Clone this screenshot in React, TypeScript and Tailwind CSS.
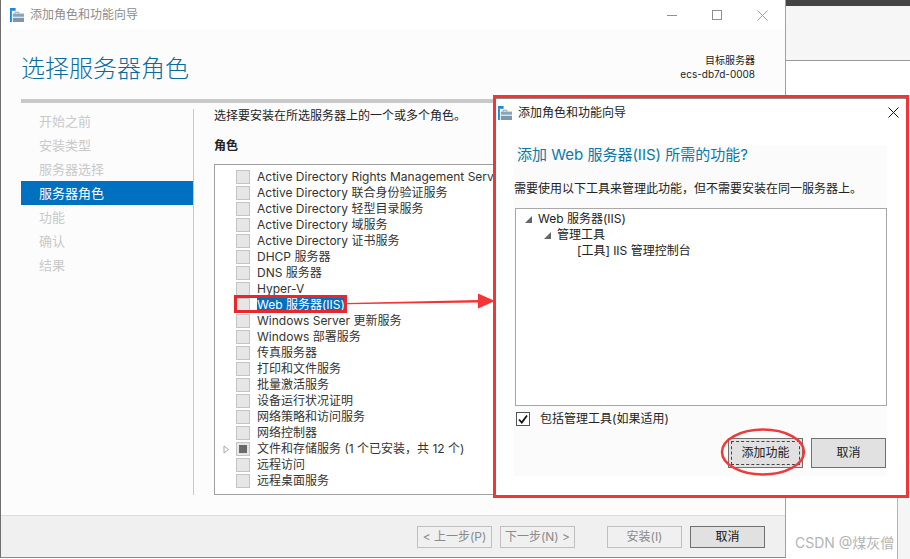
const roles = [
  "Active Directory Rights Management Services",
  "Active Directory 联合身份验证服务",
  "Active Directory 轻型目录服务",
  "Active Directory 域服务",
  "Active Directory 证书服务",
  "DHCP 服务器",
  "DNS 服务器",
  "Hyper-V",
  "Web 服务器(IIS)",
  "Windows Server 更新服务",
  "Windows 部署服务",
  "传真服务器",
  "打印和文件服务",
  "批量激活服务",
  "设备运行状况证明",
  "网络策略和访问服务",
  "网络控制器",
  "文件和存储服务 (1 个已安装，共 12 个)",
  "远程访问",
  "远程桌面服务",
];

const steps = [
  { label: "开始之前" },
  { label: "安装类型" },
  { label: "服务器选择" },
  { label: "服务器角色", active: true },
  { label: "功能" },
  { label: "确认" },
  { label: "结果" },
];

function WizardIcon() {
  return (
    <svg width="14" height="14" viewBox="0 0 15 15" className="shrink-0">
      <rect x="0" y="0" width="6" height="3" fill="#1e88d8" />
      <rect x="0" y="3" width="2" height="12" fill="#1e88d8" />
      <path d="M5.5 6V4.5h4V6" fill="none" stroke="#7f98aa" />
      <rect x="3" y="6" width="12" height="3.5" fill="#8aa4b8" />
      <rect x="3" y="10" width="12" height="5" fill="#7d98ad" />
      <rect x="3" y="9.5" width="12" height="0.8" fill="#ffffff" />
    </svg>
  );
}

function Pill({ children, kind }: { children: React.ReactNode; kind: "off" | "on" }) {
  return (
    <div
      className={
        kind === "on"
          ? "w-[75px] h-[22px] flex items-center justify-center border border-[#707070] bg-[#e1e1e1] text-[12px] text-[#111]"
          : "w-[75px] h-[22px] flex items-center justify-center border border-[#bfbfbf] bg-[#f0f0f0] text-[12px] text-[#8a8a8a]"
      }
    >
      {children}
    </div>
  );
}

export default function App() {
  return (
    <div
      className="relative w-[910px] h-[559px] overflow-hidden bg-white text-[12px] leading-[16px] text-[#222]"
      style={{ fontFamily: 'Inter, "Noto Sans CJK SC", sans-serif' }}
    >
      <div className="flex w-full h-full">
        {/* main wizard window */}
        <div className="w-[786px] h-[558px] shrink-0 flex flex-col border-l border-l-[#6f6f6f] border-r border-r-[#a0a0a0] border-b border-b-[#8a8a8a] bg-white">
          <div className="h-[30px] shrink-0 flex items-center pl-[9px] bg-white">
            <WizardIcon />
            <span className="ml-[6px] text-[#8c8c8c]">添加角色和功能向导</span>
            <div className="ml-auto flex items-center gap-[35px] pr-[17px]">
              <div className="w-[10px] h-px bg-[#8f8f8f]" />
              <div className="w-[10px] h-[10px] border border-[#8f8f8f]" />
              <svg width="11" height="11" viewBox="0 0 11 11" stroke="#a0a0a0" fill="none">
                <path d="M0.5 0.5L10.5 10.5M10.5 0.5L0.5 10.5" />
              </svg>
            </div>
          </div>

          <div className="flex-1 min-h-0 flex flex-col bg-[#fcfcfc] px-[20px]">
            <div className="h-[69px] shrink-0 flex justify-between">
              <h1 className="mt-[21px] text-[24px] leading-[36px] text-[#0a6c9c] font-light">选择服务器角色</h1>
              <div className="mt-[23px] mr-[10px] text-right text-[10px] leading-[14px] text-[#222]">
                <div>目标服务器</div>
                <div>ecs-db7d-0008</div>
              </div>
            </div>
            <div className="h-[4px] shrink-0 bg-[#c8c8c8]" />

            <div className="flex mt-[6px] h-[386px]">
              <div className="w-[172px] shrink-0 flex flex-col">
                {steps.map((s) => (
                  <div
                    key={s.label}
                    className={
                      s.active
                        ? "h-[24px] flex items-center pl-[18px] bg-[#0070c0] text-white text-[13px]"
                        : "h-[24px] flex items-center pl-[18px] text-[#c9c9c9] text-[13px]"
                    }
                  >
                    {s.label}
                  </div>
                ))}
              </div>
              <div className="w-px shrink-0 bg-[#c8c8c8]" />
              <div className="flex-1 min-w-0 pl-[20px] flex flex-col">
                <div className="h-[14px] leading-[14px]">选择要安装在所选服务器上的一个或多个角色。</div>
                <div className="mt-[15px] h-[16px] font-bold">角色</div>
                <div className="mt-[10px] h-[331px] w-[600px] border border-[#a0a0a0] bg-white pt-[4px]">
                  {roles.map((r, i) => (
                    <div key={r} className="h-[16px] flex items-center relative">
                      {i === 17 && (
                        <svg width="7" height="9" viewBox="0 0 7 9" className="absolute left-[8px] top-[4px]">
                          <path d="M1 1L5.5 4.5L1 8Z" fill="none" stroke="#a8a8a8" />
                        </svg>
                      )}
                      <div className="ml-[21px] w-[14px] h-[14px] shrink-0 border border-[#c4c4c4] bg-[#e6e6e6] flex items-center justify-center">
                        {i === 17 && <div className="w-[8px] h-[8px] bg-[#6a6a6a]" />}
                      </div>
                      <span
                        className={
                          i === 8
                            ? "ml-[7px] bg-[#0070c0] text-white whitespace-nowrap"
                            : "ml-[7px] text-[#333] whitespace-nowrap"
                        }
                      >
                        {r}
                      </span>
                    </div>
                  ))}
                </div>
              </div>
            </div>
          </div>

          <div className="h-[42px] shrink-0 flex items-center border-t border-t-[#dcdcdc] bg-[#f0f0f0] pl-[416px]">
            <Pill kind="off">&lt; 上一步(P)</Pill>
            <div className="ml-[8px]">
              <Pill kind="off">下一步(N) &gt;</Pill>
            </div>
            <div className="ml-[32px]">
              <Pill kind="off">安装(I)</Pill>
            </div>
            <div className="ml-[8px]">
              <Pill kind="on">取消</Pill>
            </div>
          </div>
        </div>

        {/* window behind */}
        <div className="flex-1 min-w-0 flex flex-col">
          <div className="h-[6px] bg-[#444444]" />
          <div className="h-[55px] bg-[#f6f6f6] border-b border-b-[#9a9a9a]" />
          <div className="flex-1 flex justify-end bg-white">
            <div className="w-[13px] border-l border-l-[#b4b4b4] mt-[400px] bg-[#f5f5f5]" />
          </div>
        </div>
      </div>

      {/* dialog in front */}
      <div className="absolute left-[493px] top-[95px] w-[416px] h-[403px] border-[3px] border-[#f53535] bg-white flex flex-col">
        <div className="h-[28px] shrink-0 flex items-center pl-[2px] border-t border-t-[#8a8a8a]">
          <WizardIcon />
          <span className="ml-[6px] text-[#222]">添加角色和功能向导</span>
          <svg width="11" height="11" viewBox="0 0 11 11" stroke="#111" fill="none" className="ml-auto mr-[7px]">
            <path d="M0.5 0.5L10.5 10.5M10.5 0.5L0.5 10.5" />
          </svg>
        </div>
        <div className="mt-[19px] ml-[18px] w-[373px] h-[331px] bg-[#fbfbfb] flex flex-col">
          <div className="h-[19px] ml-[3px] text-[15px] leading-[19px] text-[#0a7aa8]">
            添加 Web 服务器(IIS) 所需的功能?
          </div>
          <div className="mt-[17px] h-[16px] whitespace-nowrap">需要使用以下工具来管理此功能，但不需要安装在同一服务器上。</div>
          <div className="mt-[11px] ml-[1px] h-[198px] w-[372px] border border-[#a8a8a8] bg-white pt-[2px]">
            <div className="h-[16px] flex items-center pl-[9px]">
              <span className="w-0 h-0 border-l-[7px] border-l-transparent border-b-[7px] border-b-[#666]" />
              <span className="ml-[6px]">Web 服务器(IIS)</span>
            </div>
            <div className="h-[16px] flex items-center pl-[28px]">
              <span className="w-0 h-0 border-l-[7px] border-l-transparent border-b-[7px] border-b-[#666]" />
              <span className="ml-[6px]">管理工具</span>
            </div>
            <div className="h-[16px] flex items-center pl-[61px]">[工具] IIS 管理控制台</div>
          </div>
          <div className="mt-[4px] h-[18px] flex items-center ml-[2px]">
            <div className="w-[14px] h-[14px] border border-[#555] bg-white flex items-center justify-center">
              <svg width="10" height="10" viewBox="0 0 10 10" fill="none" stroke="#111" strokeWidth="1.8">
                <path d="M1 5.5L3.8 8.5L9 1.5" />
              </svg>
            </div>
            <span className="ml-[10px]">包括管理工具(如果适用)</span>
          </div>
          <div className="mt-[10px] flex justify-end gap-[8px] pr-[1px]">
            <div className="w-[75px] h-[30px] border border-[#707070] bg-[#e1e1e1] p-[2px]">
              <div className="w-full h-full border border-dashed border-[#444] flex items-center justify-center">添加功能</div>
            </div>
            <div className="w-[75px] h-[30px] border border-[#707070] bg-[#e1e1e1] flex items-center justify-center">取消</div>
          </div>
        </div>
      </div>

      {/* annotations */}
      <div className="absolute left-[234px] top-[295px] w-[113px] h-[18px] border-[3px] border-[#e8262c]" />
      <svg className="absolute left-0 top-0 pointer-events-none" width="910" height="559">
        <path d="M346 303L478 300V293.5L495 301L478 308.5V302.4L346 304.2Z" fill="#f53535" />
        <ellipse cx="763" cy="452" rx="41" ry="22.5" fill="none" stroke="#ee3a3a" strokeWidth="2.5" />
      </svg>

      <div className="absolute left-[795px] top-[534px] text-[14px] leading-[18px] text-[#b4b4b4] whitespace-nowrap">CSDN @煤灰僧</div>
    </div>
  );
}
